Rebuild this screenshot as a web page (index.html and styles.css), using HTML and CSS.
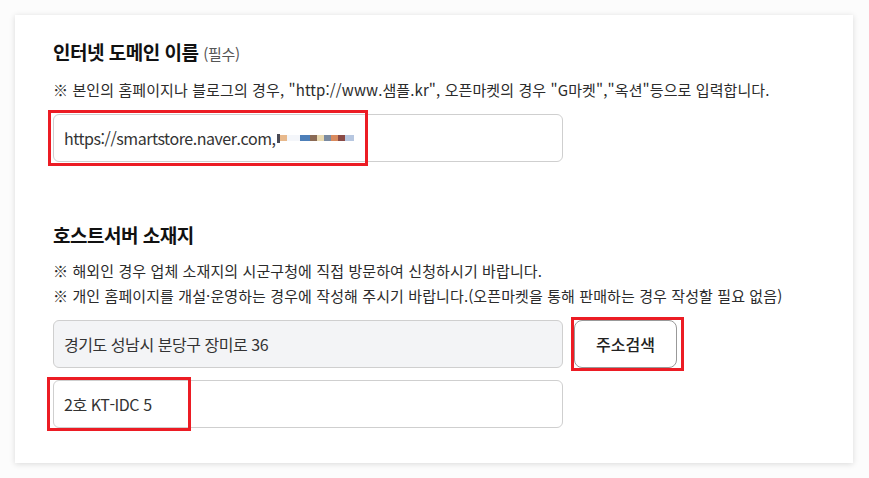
FILE: index.html
```html
<!DOCTYPE html>
<html lang="ko">
<head>
  <meta charset="UTF-8">
  <title>도메인 정보</title>
  <link rel="stylesheet" href="styles.css">
</head>
<body>
  <div class="card">
    <div class="section">
      <h2 class="title">인터넷 도메인 이름 <span class="required">(필수)</span></h2>
      <p class="note">※ 본인의 홈페이지나 블로그의 경우, "http://www.샘플.kr", 오픈마켓의 경우 "G마켓","옥션"등으로 입력합니다.</p>
      <div class="row">
        <div class="field">
          https://smartstore.naver.com,<span class="blur"><i class="p1"></i><i class="p2"></i><i class="p3"></i><i class="p4"></i><i class="p5"></i><i class="p6"></i><i class="p7"></i><i class="p8"></i><i class="p9"></i><i class="p10"></i></span>
          <div class="mark mark-url"></div>
        </div>
      </div>
    </div>

    <div class="section second">
      <h2 class="title">호스트서버 소재지</h2>
      <p class="note">※ 해외인 경우 업체 소재지의 시군구청에 직접 방문하여 신청하시기 바랍니다.</p>
      <p class="note">※ 개인 홈페이지를 개설·운영하는 경우에 작성해 주시기 바랍니다.(오픈마켓을 통해 판매하는 경우 작성할 필요 없음)</p>
      <div class="row">
        <div class="field readonly">경기도 성남시 분당구 장미로 36</div>
        <button class="search">주소검색<span class="mark mark-btn"></span></button>
      </div>
      <div class="row">
        <div class="field">2호 KT-IDC 5<div class="mark mark-detail"></div></div>
      </div>
    </div>
  </div>
</body>
</html>
```

FILE: styles.css
```css
body {
  margin: 0;
  background-color: #fcfcfc;
  font-family: "Noto Sans CJK KR", "Noto Sans", sans-serif;
  color: #222;
}

.card {
  margin: 15px 16px 15px 15px;
  height: 448px;
  box-sizing: border-box;
  background-color: white;
  box-shadow: 0 1px 6px rgba(0, 0, 0, 0.14);
  padding: 22px 38px 0 38px;
}

.title {
  margin: 0;
  font-size: 19px;
  font-weight: 700;
  line-height: 30px;
  color: #111;
  letter-spacing: -0.5px;
}

.required {
  font-size: 15px;
  font-weight: 400;
  color: #555;
  letter-spacing: -0.3px;
}

.note {
  margin: 0;
  font-size: 15px;
  line-height: 25px;
  color: #2b2b2b;
  letter-spacing: 0.1px;
}

.section .note:first-of-type {
  margin-top: 8px;
}

.second {
  margin-top: 58px;
}

.row {
  display: flex;
  gap: 11px;
  margin-top: 12px;
}

.field {
  position: relative;
  width: 510px;
  height: 48px;
  box-sizing: border-box;
  border: 1px solid #cfcfcf;
  border-radius: 6px;
  padding: 0 10px;
  display: flex;
  align-items: center;
  font-size: 16px;
  color: #333;
  letter-spacing: -0.45px;
}

.readonly {
  background-color: #f3f4f6;
}

.blur {
  display: inline-flex;
  align-items: center;
  height: 10px;
  margin-left: 1px;
}

.blur i {
  display: inline-block;
  width: 7px;
  height: 6px;
}

.p1 { background: #4a4a55; height: 9px !important; width: 3px !important; }
.p2 { background: #e8b98c; }
.p3 { background: #f4f6fa; width: 13px !important; }
.p4 { background: #4d7fb8; width: 10px !important; }
.p5 { background: #8a6a55; }
.p6 { background: #e9d9b0; }
.p7 { background: #7a8aa0; }
.p8 { background: #d98a5e; }
.p9 { background: #8a4a45; }
.p10 { background: #b7c7e0; width: 9px !important; }

.search {
  position: relative;
  width: 103px;
  height: 48px;
  border: 1px solid #999;
  border-radius: 8px;
  background-color: white;
  font-family: inherit;
  font-size: 16px;
  font-weight: 500;
  color: #222;
  cursor: pointer;
}

/* red annotation boxes */
.mark {
  position: absolute;
  border: 3px solid #ec1c24;
  pointer-events: none;
}

.mark-url {
  left: -6px;
  top: -5px;
  width: 314px;
  height: 50px;
}

.mark-btn {
  left: -4px;
  top: -4px;
  width: 107px;
  height: 48px;
}

.mark-detail {
  left: -7px;
  top: -4px;
  width: 138px;
  height: 48px;
}
```
